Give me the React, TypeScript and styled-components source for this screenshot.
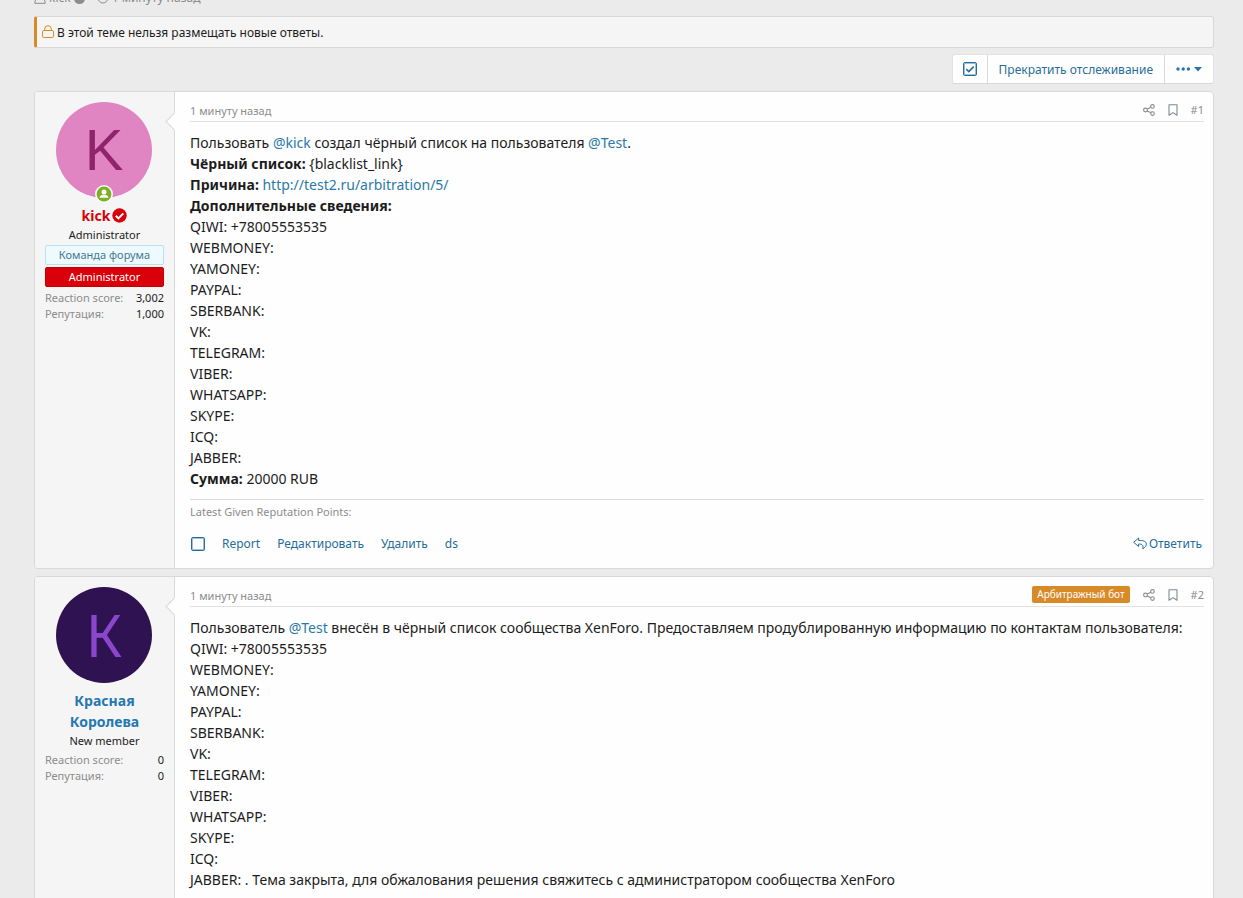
import React from 'react';
import styled, { createGlobalStyle, css } from 'styled-components';
import { Clock } from 'lucide-react';

const color = {
  page: '#ebebeb',
  panel: '#fefefe',
  side: '#f5f5f5',
  border: '#d8d8d8',
  borderSoft: '#e2e2e2',
  text: '#1c1c1c',
  muted: '#8c8c8c',
  link: '#2577b1',
  mention: '#2a7aa8',
  action: '#276d9b',
  orange: '#d88a29',
  red: '#d90009',
};

const GlobalStyle = createGlobalStyle`
  *, *::before, *::after { box-sizing: border-box; }
  html, body { margin: 0; background: ${color.page}; }
  body {
    font-family: 'Noto Sans', 'Open Sans', sans-serif;
    font-size: 14px;
    line-height: 21px;
    color: ${color.text};
  }
`;

const Page = styled.div`
  height: 100vh;
  overflow: hidden;
  padding: 0 29px 0 34px;
`;

const ThreadMeta = styled.div`
  display: flex;
  align-items: flex-end;
  gap: 12px;
  height: 8px;
  margin-bottom: 8px;
  overflow: hidden;
  font-size: 12px;
  line-height: 20px;
  color: ${color.muted};
`;

const MetaItem = styled.span`
  display: flex;
  align-items: center;
  gap: 3px;
`;

const Notice = styled.div`
  display: flex;
  align-items: center;
  gap: 3px;
  height: 32px;
  padding: 0 5px;
  border: 1px solid ${color.border};
  border-left: 3px solid ${color.orange};
  border-radius: 3px;
  background: ${color.side};
  font-size: 12px;
`;

const Toolbar = styled.div`
  display: flex;
  justify-content: flex-end;
  margin: 6px 0 7px;
`;

const ButtonGroup = styled.div`
  display: flex;
  height: 30px;
  border: 1px solid ${color.borderSoft};
  border-bottom-color: ${color.border};
  border-radius: 3px;
  background: ${color.panel};
  color: ${color.action};

  && > * + * { border-left: 1px solid ${color.border}; }
`;

const ToolButton = styled.button`
  display: flex;
  align-items: center;
  padding: 0 11px;
  border: 0;
  background: none;
  font: inherit;
  font-size: 12px;
  color: inherit;
  cursor: pointer;
`;

const CheckLabel = styled.label<{ $padded?: boolean }>`
  display: grid;
  place-items: center;
  padding: ${(p) => (p.$padded ? '0 10px' : '0')};
  color: ${color.action};
  & > * { grid-area: 1 / 1; }
`;

const CheckInput = styled.input`
  appearance: none;
  width: 14px;
  height: 14px;
  margin: 0;
  border: 1px solid ${color.action};
  border-radius: 2px;
  outline: 0;
  box-shadow: inset 0 0 0 1px #9cc0d8;
`;

const Post = styled.article`
  display: flex;
  margin-bottom: 7px;
  border: 1px solid ${color.border};
  border-radius: 4px;
  background: ${color.panel};
`;

const UserCell = styled.aside`
  position: relative;
  flex: 0 0 140px;
  padding: 10px;
  border-right: 1px solid ${color.border};
  border-radius: 3px 0 0 3px;
  background: ${color.side};
  text-align: center;

  &::after {
    content: '';
    position: absolute;
    top: 23px;
    right: -7px;
    width: 13px;
    height: 13px;
    border: solid ${color.border};
    border-width: 0 0 1px 1px;
    background: ${color.panel};
    transform: rotate(45deg);
  }
`;

const Avatar = styled.div<{ $bg: string; $fg: string; $font?: string }>`
  position: relative;
  width: 96px;
  height: 96px;
  margin: 0 12px 7px 11px;
  border-radius: 50%;
  background: ${(p) => p.$bg};
  color: ${(p) => p.$fg};
  font-family: ${(p) => p.$font ?? 'inherit'};
  font-size: 58px;
  line-height: 96px;
`;

const OnlineBadge = styled.svg`
  position: absolute;
  left: 39px;
  bottom: -5px;
`;

const UserName = styled.h4<{ $red?: boolean }>`
  display: flex;
  align-items: center;
  justify-content: center;
  gap: 2px;
  margin: 0;
  font-size: 14px;
  line-height: 21px;
  color: ${(p) => (p.$red ? color.red : color.link)};
`;

const UserTitle = styled.div`
  font-size: 11px;
  line-height: 17px;
`;

const Banner = styled.div<{ $solid?: boolean }>`
  height: 20px;
  margin-top: 2px;
  border: 1px solid #b4e4ea;
  border-radius: 2px;
  background: #edfaff;
  color: #47798d;
  font-size: 11px;
  line-height: 18px;
  ${(p) =>
    p.$solid &&
    css`
      border-color: #c40000;
      background: ${color.red};
      color: #fff;
    `}
`;

const Stats = styled.dl`
  display: grid;
  grid-template-columns: 1fr auto;
  margin: 3px 0 0;
  font-size: 11px;
  line-height: 16px;
  text-align: left;
  dt { color: ${color.muted}; }
  dd { margin: 0; text-align: right; }
`;

const Main = styled.div`
  flex: 1;
  min-width: 0;
  padding: 10px 9px 10px 15px;
`;

const PostHeader = styled.header`
  display: flex;
  align-items: center;
  justify-content: space-between;
  height: 20px;
  padding-bottom: 2px;
  border-bottom: 1px solid ${color.borderSoft};
  font-size: 11px;
  color: ${color.muted};
`;

const HeaderTools = styled.div`
  display: flex;
  align-items: center;
  gap: 13px;
  height: 16px;
  padding-bottom: 2px;
  a { display: flex; color: inherit; text-decoration: none; }
`;

const Label = styled.span`
  padding: 0 5px;
  border-radius: 2px;
  background: ${color.orange};
  color: #fff;
  font-size: 10px;
  line-height: 17px;
`;

const Body = styled.div`
  padding: 10px 0;
  a { color: ${color.mention}; text-decoration: none; }
`;

const Reputation = styled.div`
  padding-top: 3px;
  border-top: 1px solid ${color.border};
  font-size: 11px;
  line-height: 18px;
  color: ${color.muted};
`;

const Actions = styled.footer`
  display: flex;
  align-items: center;
  gap: 17px;
  margin: 12px 2px 4px 1px;
  font-size: 12px;
  line-height: 21px;
  a { color: ${color.action}; text-decoration: none; }
`;

const ReplyLink = styled.a`
  display: flex;
  align-items: center;
  gap: 2px;
  margin-left: auto;
`;

const LockIcon = () => (
  <svg width="12" height="14" viewBox="0 0 12 14" fill="none" stroke={color.orange}>
    <rect x="0.5" y="5.5" width="11" height="7" rx="1.2" />
    <path d="M2.7 5.5V4a3.3 3.3 0 0 1 6.6 0v1.5" />
  </svg>
);

const UserIcon = () => (
  <svg width="12" height="12" viewBox="0 0 12 12" fill="none" stroke="currentColor">
    <circle cx="6" cy="3.500" r="2.800" />
    <path d="M.8 11.300c0-3 1.200-4.300 3-4.300h4.400c1.800 0 3 1.300 3 4.300z" />
  </svg>
);

const ShareIcon = () => (
  <svg width="12" height="12" viewBox="0 0 12 12" fill="none" stroke="currentColor" strokeWidth="1.1">
    <circle cx="2.500" cy="6" r="1.900" />
    <circle cx="9.500" cy="2.400" r="1.800" />
    <circle cx="9.500" cy="9.600" r="1.800" />
    <path d="M4.200 5.100l3.700-1.900M4.200 6.900l3.700 1.900" />
  </svg>
);

const BookmarkIcon = () => (
  <svg width="10" height="12" viewBox="0 0 10 12" fill="none" stroke="#7f8a90" strokeWidth="1.1" strokeLinejoin="round">
    <path d="M1 .7h8v10.500L5 8.600l-4 2.600z" />
  </svg>
);

const CheckMark = () => (
  <svg width="14" height="14" viewBox="0 0 14 14" fill="none" stroke="currentColor" strokeWidth="1.6">
    <path d="M3.3 7.2l2.5 2.4 4.9-5" />
  </svg>
);

const MoreIcon = () => (
  <svg width="26" height="10" viewBox="0 0 26 10" fill={color.link}>
    <circle cx="2" cy="5" r="1.7" />
    <circle cx="7.200" cy="5" r="1.7" />
    <circle cx="12.400" cy="5" r="1.7" />
    <path d="M18 3h8l-4 4.5z" />
  </svg>
);

const VerifiedIcon = () => (
  <svg width="15" height="15" viewBox="0 0 15 15">
    <circle cx="7.5" cy="7.5" r="7.2" fill={color.red} />
    <path d="M3.8 7.8l2.6 2.6 4.9-5" fill="none" stroke="#fff" strokeWidth="2" />
  </svg>
);

const ReplyIcon = () => (
  <svg width="14" height="13" viewBox="0 0 14 13" fill="none" stroke="currentColor" strokeLinejoin="round">
    <path d="M5.6 1L.7 5.3l4.900 4.200V7c3.400 0 5 .7 4.200 4.800C12 10.600 13.300 9 13.300 7c0-2.800-3-3.600-7.700-3.600z" />
  </svg>
);

const OnlineIcon = () => (
  <OnlineBadge width="18" height="18" viewBox="0 0 18 18">
    <circle cx="9" cy="9" r="9" fill="#f8f8f8" />
    <circle cx="9" cy="9" r="7.4" fill="#7eae26" />
    <circle cx="9" cy="6.900" r="2.500" fill="#fff" />
    <path d="M4.700 12.700c0-2.200 1.600-2.900 4.300-2.900s4.300.7 4.300 2.900z" fill="#fff" />
  </OnlineBadge>
);

const contacts = [
  'WEBMONEY:', 'YAMONEY:', 'PAYPAL:', 'SBERBANK:', 'VK:', 'TELEGRAM:',
  'VIBER:', 'WHATSAPP:', 'SKYPE:', 'ICQ:',
];

const Contacts = () => (
  <>
    <div>QIWI: +78005553535</div>
    {contacts.map((c) => <div key={c}>{c}</div>)}
  </>
);

const UserStats = ({ score, rep }: { score: string; rep: string }) => (
  <Stats>
    <dt>Reaction score:</dt><dd>{score}</dd>
    <dt>Репутация:</dt><dd>{rep}</dd>
  </Stats>
);

const Header = ({ num, label }: { num: number; label?: string }) => (
  <PostHeader>
    <time>1 минуту назад</time>
    <HeaderTools>
      {label && <Label>{label}</Label>}
      <a href="#share" aria-label="Поделиться"><ShareIcon /></a>
      <a href="#bookmark" aria-label="Закладка"><BookmarkIcon /></a>
      <a href={`#post-${num}`}>#{num}</a>
    </HeaderTools>
  </PostHeader>
);

export default function App() {
  return (
    <>
      <GlobalStyle />
      <Page>
        <ThreadMeta>
          <MetaItem>
            <UserIcon />kick
            <svg width="11" height="11"><circle cx="5.5" cy="5.5" r="5.5" fill={color.muted} /></svg>
          </MetaItem>
          <MetaItem><Clock size={12} />1 минуту назад</MetaItem>
        </ThreadMeta>
        <Notice><LockIcon />В этой теме нельзя размещать новые ответы.</Notice>
        <Toolbar>
          <ButtonGroup>
            <CheckLabel $padded>
              <CheckInput type="checkbox" defaultChecked aria-label="Выбрать все" />
              <CheckMark />
            </CheckLabel>
            <ToolButton>Прекратить отслеживание</ToolButton>
            <ToolButton aria-label="Ещё"><MoreIcon /></ToolButton>
          </ButtonGroup>
        </Toolbar>

        <Post id="post-1">
          <UserCell>
            <Avatar $bg="#e085c2" $fg="#8f246c" $font="'Liberation Sans', sans-serif">K<OnlineIcon /></Avatar>
            <UserName $red>kick<VerifiedIcon /></UserName>
            <UserTitle>Administrator</UserTitle>
            <Banner>Команда форума</Banner>
            <Banner $solid>Administrator</Banner>
            <UserStats score="3,002" rep="1,000" />
          </UserCell>
          <Main>
            <Header num={1} />
            <Body>
              <div>Пользовать <a href="#kick">@kick</a> создал чёрный список на пользователя <a href="#test">@Test</a>.</div>
              <div><b>Чёрный список:</b> {'{blacklist_link}'}</div>
              <div><b>Причина:</b> <a href="#arbitration">http://test2.ru/arbitration/5/</a></div>
              <div><b>Дополнительные сведения:</b></div>
              <Contacts />
              <div>JABBER:</div>
              <div><b>Сумма:</b> 20000 RUB</div>
            </Body>
            <Reputation>Latest Given Reputation Points:</Reputation>
            <Actions>
              <CheckLabel><CheckInput type="checkbox" aria-label="Выбрать сообщение" /></CheckLabel>
              <a href="#report">Report</a>
              <a href="#edit">Редактировать</a>
              <a href="#delete">Удалить</a>
              <a href="#ds">ds</a>
              <ReplyLink href="#reply"><ReplyIcon />Ответить</ReplyLink>
            </Actions>
          </Main>
        </Post>

        <Post id="post-2">
          <UserCell>
            <Avatar $bg="#2f1251" $fg="#8a47cc">К</Avatar>
            <UserName>Красная<br />Королева</UserName>
            <UserTitle>New member</UserTitle>
            <UserStats score="0" rep="0" />
          </UserCell>
          <Main>
            <Header num={2} label="Арбитражный бот" />
            <Body>
              <div>Пользователь <a href="#test">@Test</a> внесён в чёрный список сообщества XenForo. Предоставляем продублированную информацию по контактам пользователя:</div>
              <Contacts />
              <div>JABBER: . Тема закрыта, для обжалования решения свяжитесь с администратором сообщества XenForo</div>
            </Body>
          </Main>
        </Post>
      </Page>
    </>
  );
}
